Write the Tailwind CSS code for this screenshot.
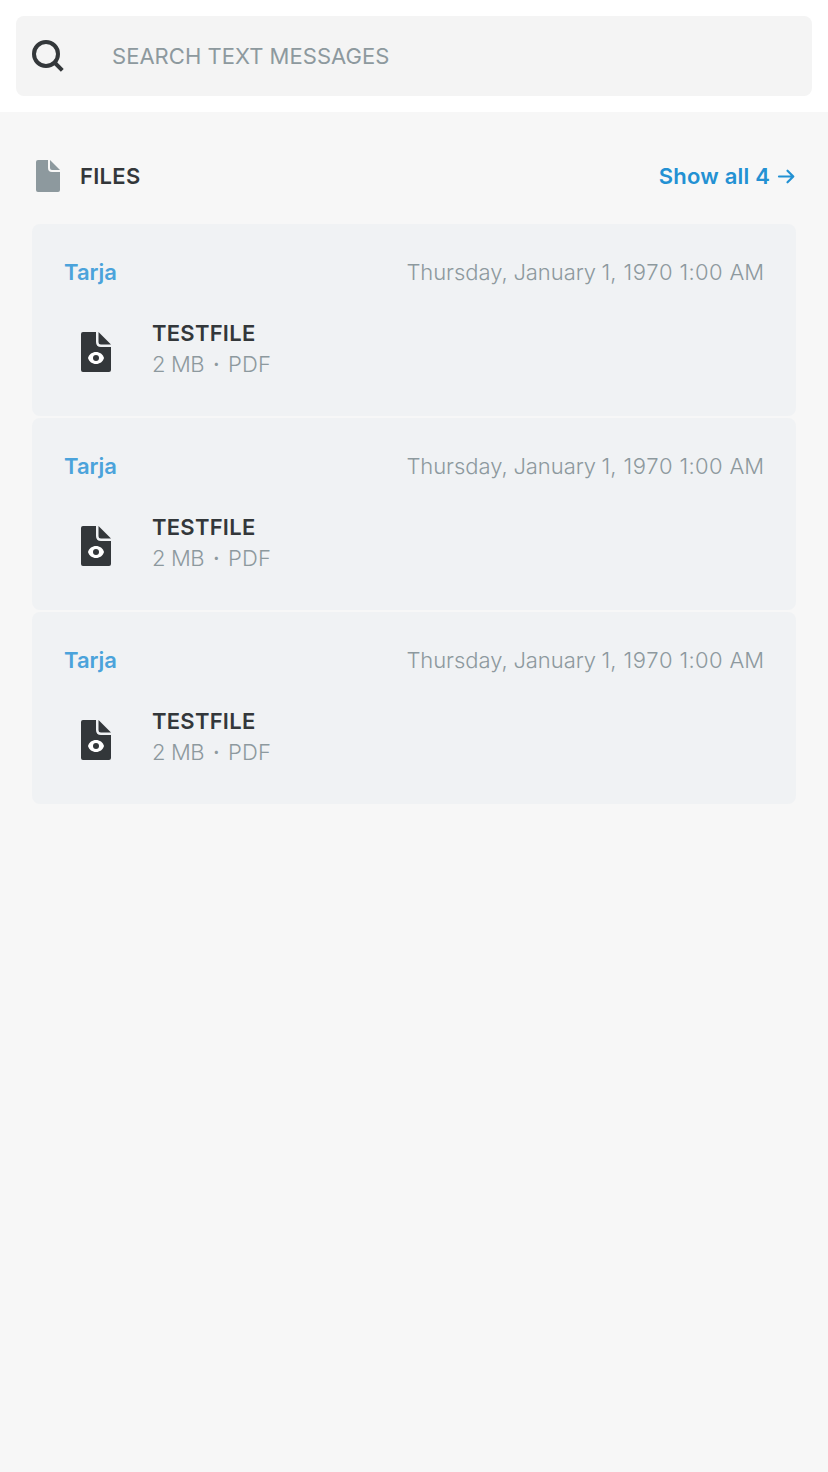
<!DOCTYPE html>
<html lang="en"><head><meta charset="utf-8"><title>Files</title>
<script src="https://cdn.jsdelivr.net/npm/@tailwindcss/browser@4"></script></head>
<body class="min-h-screen bg-[#f7f7f7] font-['Inter',sans-serif] text-[22px] leading-8 text-[#33373a]">
<header class="h-28 bg-white p-4">
<div class="flex h-20 items-center rounded-lg bg-[#f4f4f4] px-4 text-[#8d999e]">
<svg class="h-8 w-8 text-[#33373a]" viewBox="0 0 32 32" fill="none" stroke="currentColor" stroke-width="4"><circle cx="14" cy="14" r="12"/><path d="M22.5 22.5L30.3 30.3"/></svg>
<span class="ml-12 whitespace-nowrap tracking-[0.03px]">SEARCH TEXT MESSAGES</span>
</div></header>
<main class="px-8 pt-12">
<div class="mb-8 flex h-8 items-center">
<svg class="h-8 w-8 text-[#8d999e]" viewBox="0 0 32 32" fill="currentColor"><path d="M6 0H16V8Q16 12 20 12H28V30Q28 32 26 32H6Q4 32 4 30V2Q4 0 6 0Z"/><path d="M18 0L28 10H20Q18 10 18 8Z"/></svg>
<h1 class="ml-4 font-semibold tracking-[0.3px]">FILES</h1>
<a class="ml-auto flex items-center font-semibold tracking-[0.2px] text-[#2391d3]"><span>Show all 4</span><svg class="mr-px ml-[7px] h-4 w-[18px]" viewBox="0 0 18 16" fill="none" stroke="currentColor" stroke-width="2.2" stroke-linecap="round" stroke-linejoin="round"><path d="M2 8.5H16M10.5 2.7L16.3 8.5L10.5 14.3"/></svg></a>
</div>
<div id="list" class="flex flex-col gap-0.5"></div>
<template id="card"><section class="h-48 rounded-lg bg-[#f0f2f4] p-8">
<div class="flex justify-between"><span class="font-semibold text-[#4ba3db]">Tarja</span><time class="flex font-light whitespace-pre text-[#8d999e]"><span class="w-[107px] tracking-[-0.05px]">Thursday, </span><span class="w-[88px] tracking-[-0.05px]">January </span><span class="w-[22px] tracking-[0.2px]">1, </span><span class="w-[56px] tracking-[0.7px]">1970</span><span class="w-[50px] tracking-[0.4px]">1:00</span><span>AM</span></time></div>
<div class="mt-[30px] flex"><svg class="mt-[14px] ml-[17px] h-10 w-[30px]" viewBox="0 0 30 40" fill="currentColor"><path d="M2 0H15V10Q15 15 20 15H30V38Q30 40 28 40H2Q0 40 0 38V2Q0 0 2 0Z"/><path d="M17.5 0L30 12.5H20Q17.5 12.5 17.5 10Z"/><path fill="white" d="M7 26C8 22.3 11.3 20 15 20S22 22.3 23 26C22 29.7 18.7 32 15 32S8 29.7 7 26Z"/><circle cx="15" cy="26" r="3"/></svg>
<div class="ml-[41px] leading-[31px]"><div class="font-semibold tracking-[0.25px]">TESTFILE</div><div class="flex font-light text-[#8d999e]"><span class="w-[61px] tracking-[-0.4px]">2 MB</span><span class="w-[15px] font-medium">·</span><span class="tracking-[0.2px]">PDF</span></div></div></div>
</section></template>
</main>
<script>for(let i=0;i<3;i++)document.getElementById('list').append(document.getElementById('card').content.cloneNode(true));</script>
</body></html>
